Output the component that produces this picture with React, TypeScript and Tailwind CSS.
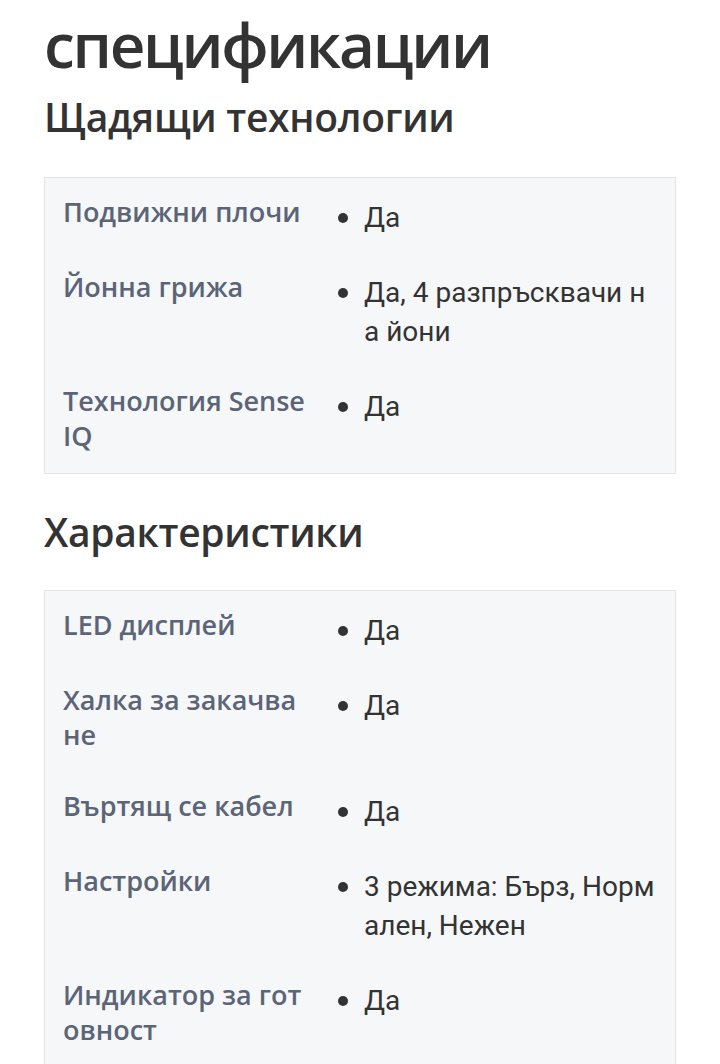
import React from "react";

type Spec = {
  label: string;
  value: string;
};

const careTech: Spec[] = [
  { label: "Подвижни плочи", value: "Да" },
  { label: "Йонна грижа", value: "Да, 4 разпръсквачи на йони" },
  { label: "Технология Sense IQ", value: "Да" },
];

const features: Spec[] = [
  { label: "LED дисплей", value: "Да" },
  { label: "Халка за закачване", value: "Да" },
  { label: "Въртящ се кабел", value: "Да" },
  { label: "Настройки", value: "3 режима: Бърз, Нормален, Нежен" },
  { label: "Индикатор за готовност", value: "Да" },
];

function SpecTable({ items }: { items: Spec[] }) {
  return (
    <div className="flex flex-col gap-[32px] border border-[#e3e4e6] bg-[#f6f7f8] px-[18px] pt-[16px] pb-[16px]">
      {items.map((s) => (
        <div key={s.label} className="flex items-start">
          <div className="w-[262px] shrink-0 pr-[17px] pb-[4px] text-[27px] font-semibold leading-[35px] text-[#5b6577] break-all">
            {s.label}
          </div>
          <div className="flex flex-1 items-start pt-[4px] pl-[13px]">
            <span className="mt-[15px] mr-[16px] h-[10px] w-[10px] shrink-0 rounded-full bg-[#333]" />
            <span className="font-['Roboto',sans-serif] text-[28px] leading-[39px] text-[#333] break-all">
              {s.value}
            </span>
          </div>
        </div>
      ))}
    </div>
  );
}

export default function App() {
  return (
    <div
      lang="bg"
      className="min-h-[1064px] bg-white px-[44px] pt-[8px] pb-[40px] font-['Open_Sans',sans-serif] text-[#333]"
    >
      <h1 className="text-[62px] font-semibold leading-[72px] tracking-[-2.3px]">спецификации</h1>
      <h2 className="mt-[15px] text-[39px] font-semibold leading-[44px] tracking-[-0.3px]">
        Щадящи технологии
      </h2>
      <div className="mt-[38px]">
        <SpecTable items={careTech} />
      </div>
      <h2 className="mt-[36px] text-[39px] font-semibold leading-[44px] tracking-[-0.3px]">
        Характеристики
      </h2>
      <div className="mt-[36px]">
        <SpecTable items={features} />
      </div>
    </div>
  );
}
